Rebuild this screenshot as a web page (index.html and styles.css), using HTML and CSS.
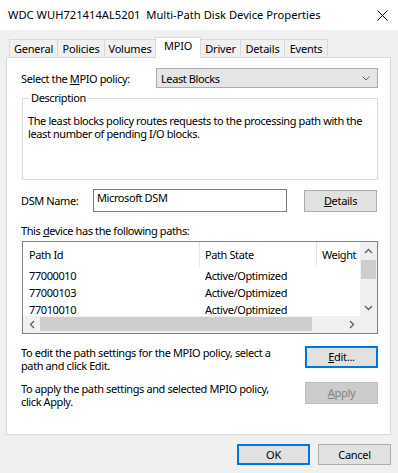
FILE: index.html
```html
<!DOCTYPE html>
<html lang="en">
<head>
  <meta charset="UTF-8" />
  <title>Multi-Path Disk Device Properties</title>
  <link rel="stylesheet" href="styles.css">
</head>
<body>

<div class="window">
  <!-- Title bar -->
  <div class="titlebar">
    <span class="title">WDC WUH721414AL5201&nbsp; Multi-Path Disk Device Properties</span>
    <svg class="close" width="11" height="11" viewBox="0 0 11 11"><path d="M0.5 0.5L10.5 10.5M10.5 0.5L0.5 10.5" stroke="#000" stroke-width="1" fill="none"/></svg>
  </div>

  <div class="client">
    <!-- Tabs -->
    <div class="tabs">
      <div class="tab tab-general">General</div>
      <div class="tab tab-policies">Policies</div>
      <div class="tab tab-volumes">Volumes</div>
      <div class="tab tab-mpio active">MPIO</div>
      <div class="tab tab-driver">Driver</div>
      <div class="tab tab-details">Details</div>
      <div class="tab tab-events">Events</div>
    </div>

    <div class="panel">
      <div class="policy-row">
        <span class="policy-label">Select the <u>M</u>PIO policy:</span>
        <div class="select">
          <span>Least Blocks</span>
          <svg width="8" height="5" viewBox="0 0 8 5"><path d="M0.5 0.5L4 4L7.5 0.5" stroke="#606060" fill="none"/></svg>
        </div>
      </div>

      <div class="groupbox">
        <span class="group-title">Description</span>
        <p class="desc">The least blocks policy routes requests to the processing path with the<br>least number of pending I/O blocks.</p>
      </div>

      <div class="dsm-row">
        <span class="dsm-label">DSM Name:</span>
        <div class="textbox">Microsoft DSM</div>
        <button class="btn details-btn"><u>D</u>etails</button>
      </div>

      <div class="paths-label">This <u>d</u>evice has the following paths:</div>

      <div class="listview">
        <div class="lv-main">
          <div class="lv-content">
            <div class="lv-header">
              <div class="col col-id">Path Id</div>
              <div class="col col-state">Path State</div>
              <div class="col col-weight">Weight</div>
            </div>
            <div class="lv-row"><div class="col col-id">77000010</div><div class="col col-state">Active/Optimized</div></div>
            <div class="lv-row"><div class="col col-id">77000103</div><div class="col col-state">Active/Optimized</div></div>
            <div class="lv-row"><div class="col col-id">77010010</div><div class="col col-state">Active/Optimized</div></div>
          </div>
          <div class="vscroll">
            <div class="sb-btn"><svg width="9" height="6" viewBox="0 0 9 6"><path d="M1 5L4.5 1.5L8 5" stroke="#606060" stroke-width="1.4" fill="none"/></svg></div>
            <div class="vthumb"></div>
            <div class="sb-fill"></div>
            <div class="sb-btn"><svg width="9" height="6" viewBox="0 0 9 6"><path d="M1 1L4.5 4.5L8 1" stroke="#606060" stroke-width="1.4" fill="none"/></svg></div>
          </div>
        </div>
        <div class="hscroll">
          <div class="sb-btn"><svg width="6" height="9" viewBox="0 0 6 9"><path d="M5 1L1.5 4.5L5 8" stroke="#606060" stroke-width="1.4" fill="none"/></svg></div>
          <div class="hthumb"></div>
          <div class="sb-fill"></div>
          <div class="sb-btn"><svg width="6" height="9" viewBox="0 0 6 9"><path d="M1 1L4.5 4.5L1 8" stroke="#606060" stroke-width="1.4" fill="none"/></svg></div>
          <div class="corner"></div>
        </div>
      </div>

      <div class="action-row edit-row">
        <p class="action-text">To edit the path settings for the MPIO policy, select a<br>path and click Edit.</p>
        <button class="btn default"><u>E</u>dit...</button>
      </div>

      <div class="action-row apply-row">
        <p class="action-text">To apply the path settings and selected MPIO policy,<br>click Apply.</p>
        <button class="btn disabled"><u>A</u>pply</button>
      </div>
    </div>

    <div class="footer">
      <button class="btn default">OK</button>
      <button class="btn">Cancel</button>
    </div>
  </div>
</div>

</body>
</html>
```

FILE: styles.css
```css
* {
  margin: 0; padding: 0; box-sizing: border-box;
}
body {
  font-family: 'Noto Sans', 'Liberation Sans', sans-serif;
  font-size: 11px;
  letter-spacing: -0.4px;
  color: #000;
  background: #fff;
}
u {
  text-decoration: underline;
  text-underline-offset: 1px;
}
.window {
  width: 398px;
  height: 473px;
  display: flex;
  flex-direction: column;
}

/* Title bar */
.titlebar {
  height: 30px;
  display: flex;
  align-items: center;
  justify-content: space-between;
  padding: 0 10px 0 8px;
  background: #fff;
}
.title {
  font-size: 11.2px;
  letter-spacing: 0;
  line-height: 14px;
  white-space: nowrap;
}
.close {
  margin-top: 1px;
}

/* Client area */
.client {
  flex: 1;
  background: #f0f0f0;
  padding: 7px 0 0 6px;
}
.tabs {
  display: flex;
  align-items: flex-end;
  height: 20px;
  padding-left: 3px;
}
.tab {
  height: 18px;
  border: 1px solid #d9d9d9;
  border-bottom: none;
  margin-left: -1px;
  background: #f0f0f0;
  display: flex;
  align-items: center;
  justify-content: center;
  line-height: 14px;
  letter-spacing: -0.2px;
  white-space: nowrap;
}
.tab-general { width: 49px; margin-left: 0; }
.tab-policies { width: 48px; }
.tab-volumes { width: 52px; }
.tab-mpio { width: 46px; }
.tab-driver { width: 41px; }
.tab-details { width: 45px; }
.tab-events { width: 44px; }
.tab.active {
  height: 21px;
  margin-bottom: -1px;
  background: #fff;
  align-items: flex-start;
  padding-top: 1px;
  position: relative;
  z-index: 1;
}

/* Panel */
.panel {
  width: 385px;
  height: 378px;
  border: 1px solid #d9d9d9;
  background: #fff;
  padding: 10px 12px 0 14px;
}
.policy-row {
  display: flex;
  align-items: center;
  height: 20px;
}
.policy-label {
  width: 135px;
  white-space: nowrap;
}
.select {
  width: 222px;
  height: 20px;
  background: #e5e5e5;
  border: 1px solid #acacac;
  display: flex;
  align-items: center;
  justify-content: space-between;
  padding: 0 7px 0 4px;
}

.groupbox {
  margin: 10px 0 0 1px;
  width: 356px;
  height: 82px;
  border: 1px solid #dcdcdc;
  padding: 0 5px;
}
.group-title {
  display: block;
  width: fit-content;
  margin: -8px 0 0 1px;
  padding: 0 2px;
  background: #fff;
  line-height: 14px;
}
.desc {
  margin-top: 9px;
  line-height: 13px;
  white-space: nowrap;
}

.dsm-row {
  display: flex;
  align-items: center;
  height: 23px;
  margin-top: 9px;
}
.dsm-label {
  width: 72px;
}
.textbox {
  width: 194px;
  height: 23px;
  border: 1px solid #7a7a7a;
  padding: 1px 3px 0;
  line-height: 14px;
  align-self: flex-start;
}
.btn {
  font-family: inherit;
  font-size: 11px;
  letter-spacing: -0.3px;
  color: #000;
  width: 73px;
  height: 22px;
  background: #e1e1e1;
  border: 1px solid #adadad;
  line-height: 14px;
}
.btn.default {
  border: 2px solid #0078d7;
}
.btn.disabled {
  background: #cccccc;
  border-color: #bfbfbf;
  color: #838383;
}
.details-btn {
  margin-left: 17px;
  align-self: flex-end;
}

.paths-label {
  margin-top: 12px;
  line-height: 14px;
}

/* List view */
.listview {
  margin: 3px 0 0 1px;
  width: 356px;
  height: 93px;
  border: 1px solid #828282;
  display: flex;
  flex-direction: column;
}
.lv-main {
  display: flex;
  height: 74px;
}
.lv-content {
  width: 337px;
  overflow: hidden;
}
.lv-header {
  display: flex;
  height: 25px;
  align-items: center;
}
.lv-header .col {
  height: 25px;
  display: flex;
  align-items: center;
  border-right: 1px solid #e5e5e5;
}
.lv-header .col-weight {
  border-right: none;
}
.lv-row {
  display: flex;
  height: 17px;
  align-items: center;
  line-height: 14px;
  white-space: nowrap;
}
.col-id { width: 177px; padding-left: 6px; }
.col-state { width: 117px; padding-left: 5px; }
.col-weight { width: 43px; padding-left: 5px; white-space: nowrap; }

.vscroll {
  width: 17px;
  background: #f0f0f0;
  display: flex;
  flex-direction: column;
}
.sb-btn {
  width: 17px;
  height: 17px;
  display: flex;
  align-items: center;
  justify-content: center;
  background: #f0f0f0;
}
.vthumb {
  height: 19px;
  margin: 1px 1px 0;
  background: #cdcdcd;
}
.sb-fill {
  flex: 1;
}
.hscroll {
  display: flex;
  height: 17px;
  background: #f0f0f0;
}
.hthumb {
  width: 272px;
  margin: 1px 0 2px;
  background: #cdcdcd;
}
.corner {
  width: 17px;
  background: #f0f0f0;
}

/* Bottom actions */
.action-row {
  display: flex;
  justify-content: space-between;
  align-items: flex-start;
}
.edit-row {
  margin-top: 12px;
}
.apply-row {
  margin-top: 10px;
}
.action-text {
  line-height: 13px;
  white-space: nowrap;
}

.footer {
  display: flex;
  justify-content: flex-end;
  gap: 8px;
  padding: 9px 7px 0 0;
}
.footer .btn {
  height: 21px;
}
```
